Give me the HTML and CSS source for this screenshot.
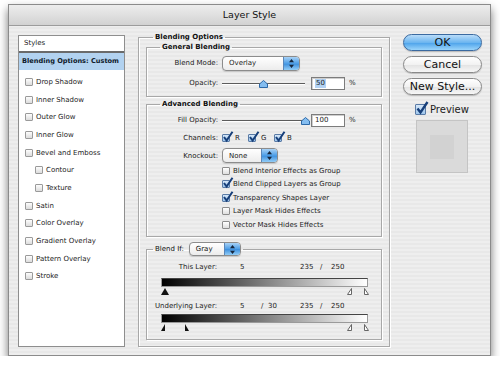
FILE: index.html
```html
<!DOCTYPE html>
<html lang="en">
<head>
  <meta charset="UTF-8">
  <title>Layer Style</title>
  <link rel="stylesheet" href="styles.css">
</head>
<body>
  <div class="window">
    <div class="titlebar">Layer Style</div>
    <div class="content">

      <!-- styles list -->
      <div class="styles-list">
        <div class="list-head">Styles</div>
        <div class="list-selected">Blending Options: Custom</div>
        <div class="list-rows">
          <div class="list-item"><span class="box"></span>Drop Shadow</div>
          <div class="list-item"><span class="box"></span>Inner Shadow</div>
          <div class="list-item"><span class="box"></span>Outer Glow</div>
          <div class="list-item"><span class="box"></span>Inner Glow</div>
          <div class="list-item"><span class="box"></span>Bevel and Emboss</div>
          <div class="list-item sub"><span class="box"></span>Contour</div>
          <div class="list-item sub"><span class="box"></span>Texture</div>
          <div class="list-item"><span class="box"></span>Satin</div>
          <div class="list-item"><span class="box"></span>Color Overlay</div>
          <div class="list-item"><span class="box"></span>Gradient Overlay</div>
          <div class="list-item"><span class="box"></span>Pattern Overlay</div>
          <div class="list-item"><span class="box"></span>Stroke</div>
        </div>
      </div>

      <!-- blending options -->
      <fieldset class="group outer">
        <legend>Blending Options</legend>

        <fieldset class="group general">
          <legend class="inner-legend">General Blending</legend>
          <div class="row h20">
            <span class="lbl">Blend Mode:</span>
            <span class="select mode"><span class="sel-text">Overlay</span><span class="arrows"><svg width="5" height="9" viewBox="0 0 5 9"><path d="M2.5 0 L5 3.2 H0 Z M2.5 9 L0 5.8 H5 Z" fill="#16263d"/></svg></span></span>
          </div>
          <div class="row h20">
            <span class="lbl">Opacity:</span>
            <span class="slider"><span class="thumb" style="left: 50%"><svg width="9" height="8" viewBox="0 0 9 8"><path d="M4.5 0.5 L8.5 4 V7.5 H0.5 V4 Z" fill="#84bdf0" stroke="#2d69a8"/></svg></span></span>
            <span class="field"><span class="hilite">50</span></span>
            <span class="pct">%</span>
          </div>
        </fieldset>

        <fieldset class="group advanced">
          <legend class="inner-legend">Advanced Blending</legend>
          <div class="row h18">
            <span class="lbl">Fill Opacity:</span>
            <span class="slider"><span class="thumb" style="left: 100%"><svg width="9" height="8" viewBox="0 0 9 8"><path d="M4.5 0.5 L8.5 4 V7.5 H0.5 V4 Z" fill="#84bdf0" stroke="#2d69a8"/></svg></span></span>
            <span class="field">100</span>
            <span class="pct">%</span>
          </div>
          <div class="row h18">
            <span class="lbl">Channels:</span>
            <span class="chan"><span class="cb on"><svg width="12" height="12" viewBox="0 0 12 12"><path d="M2 6 L4.6 9.5 L10.5 0.8" fill="none" stroke="#173f7a" stroke-width="2"/></svg></span>R</span>
            <span class="chan"><span class="cb on"><svg width="12" height="12" viewBox="0 0 12 12"><path d="M2 6 L4.6 9.5 L10.5 0.8" fill="none" stroke="#173f7a" stroke-width="2"/></svg></span>G</span>
            <span class="chan"><span class="cb on"><svg width="12" height="12" viewBox="0 0 12 12"><path d="M2 6 L4.6 9.5 L10.5 0.8" fill="none" stroke="#173f7a" stroke-width="2"/></svg></span>B</span>
          </div>
          <div class="row h17">
            <span class="lbl">Knockout:</span>
            <span class="select knock"><span class="sel-text">None</span><span class="arrows"><svg width="5" height="9" viewBox="0 0 5 9"><path d="M2.5 0 L5 3.2 H0 Z M2.5 9 L0 5.8 H5 Z" fill="#16263d"/></svg></span></span>
          </div>
          <div class="opt"><span class="cb"></span>Blend Interior Effects as Group</div>
          <div class="opt"><span class="cb on"><svg width="12" height="12" viewBox="0 0 12 12"><path d="M2 6 L4.6 9.5 L10.5 0.8" fill="none" stroke="#173f7a" stroke-width="2"/></svg></span>Blend Clipped Layers as Group</div>
          <div class="opt"><span class="cb on"><svg width="12" height="12" viewBox="0 0 12 12"><path d="M2 6 L4.6 9.5 L10.5 0.8" fill="none" stroke="#173f7a" stroke-width="2"/></svg></span>Transparency Shapes Layer</div>
          <div class="opt"><span class="cb"></span>Layer Mask Hides Effects</div>
          <div class="opt"><span class="cb"></span>Vector Mask Hides Effects</div>
        </fieldset>

        <fieldset class="group blendif">
          <legend class="if-legend">Blend If: <span class="select gray"><span class="sel-text">Gray</span><span class="arrows"><svg width="5" height="9" viewBox="0 0 5 9"><path d="M2.5 0 L5 3.2 H0 Z M2.5 9 L0 5.8 H5 Z" fill="#16263d"/></svg></span></span></legend>
          <div class="row h14 first">
            <span class="lbl2">This Layer:</span>
            <span class="n-a">5</span><span class="n-s"></span><span class="n-b"></span>
            <span class="n-c">235</span><span class="n-d">/</span><span>250</span>
          </div>
          <div class="bar"></div>
          <div class="ticks">
            <svg class="tick" style="left: 0px" width="8" height="7" viewBox="0 0 8 7"><path d="M4 0 L8 7 H0 Z" fill="#111"/></svg>
            <svg class="tick" style="left: 186px" width="5" height="7" viewBox="0 0 5 7"><path d="M0.5 6.5 L4.5 0.5 V6.5 Z" fill="#fff" stroke="#666"/></svg>
            <svg class="tick" style="left: 203px" width="5" height="7" viewBox="0 0 5 7"><path d="M0.5 0.5 V6.5 H4.5 Z" fill="#fff" stroke="#666"/></svg>
          </div>
          <div class="row h14 second">
            <span class="lbl2">Underlying Layer:</span>
            <span class="n-a">5</span><span class="n-s">/</span><span class="n-b">30</span>
            <span class="n-c">235</span><span class="n-d">/</span><span>250</span>
          </div>
          <div class="bar low"></div>
          <div class="ticks">
            <svg class="tick" style="left: 0px" width="5" height="7" viewBox="0 0 5 7"><path d="M0 7 L4 0 V7 Z" fill="#111"/></svg>
            <svg class="tick" style="left: 24px" width="5" height="7" viewBox="0 0 5 7"><path d="M0 0 V7 H4 Z" fill="#111"/></svg>
            <svg class="tick" style="left: 186px" width="5" height="7" viewBox="0 0 5 7"><path d="M0.5 6.5 L4.5 0.5 V6.5 Z" fill="#fff" stroke="#666"/></svg>
            <svg class="tick" style="left: 203px" width="5" height="7" viewBox="0 0 5 7"><path d="M0.5 0.5 V6.5 H4.5 Z" fill="#fff" stroke="#666"/></svg>
          </div>
        </fieldset>
      </fieldset>

      <!-- buttons -->
      <div class="side">
        <button class="btn ok">OK</button>
        <button class="btn">Cancel</button>
        <button class="btn">New Style...</button>
        <div class="preview-row">
          <span class="cb big on"><svg width="14" height="14" viewBox="0 0 14 14"><path d="M2.5 7.5 L5.5 11.5 L12.5 1" fill="none" stroke="#173f7a" stroke-width="2.4"/></svg></span>
          Preview
        </div>
        <div class="swatch"><div class="swatch-inner"></div></div>
      </div>

    </div>
  </div>
</body>
</html>
```

FILE: styles.css
```css
body {
  margin: 0;
  background: #fff;
  font-family: "DejaVu Sans", Verdana, sans-serif;
  font-size: 7px;
  color: #1c1c1c;
}

.window {
  width: 483px;
  height: 352px;
  margin: 4px 0 0 8px;
  box-sizing: border-box;
  border: 1px solid #8b8b8b;
  background: repeating-linear-gradient(#eeeeee 0, #eeeeee 2px, #e8e8e8 2px, #e8e8e8 4px);
  box-shadow: 0 5px 9px rgba(0, 0, 0, 0.55);
}
.titlebar {
  height: 20px;
  line-height: 20px;
  text-align: center;
  font-size: 9.5px;
  color: #111;
  background: linear-gradient(#ededed, #d2d2d2);
  border-bottom: 1px solid #9c9c9c;
}
.content {
  display: flex;
  align-items: flex-start;
  padding: 9px 0 0 9px;
}

/* left list */
.styles-list {
  width: 107px;
  height: 312px;
  box-sizing: border-box;
  border: 1px solid #8e8e8e;
  background: #fff;
}
.list-head {
  height: 15px;
  line-height: 15px;
  padding-left: 5px;
  border-bottom: 2px solid #6a6a6a;
}
.list-selected {
  height: 17px;
  line-height: 17px;
  padding-left: 3px;
  background: #b2d2f0;
  font-size: 6.6px;
  font-weight: bold;
  white-space: nowrap;
  color: #0f1a2a;
}
.list-rows {
  padding-top: 3px;
}
.list-item {
  display: flex;
  align-items: center;
  gap: 3px;
  height: 17.7px;
  padding-left: 6px;
}
.list-item.sub {
  padding-left: 16px;
}
.box {
  width: 6px;
  height: 6px;
  border: 1px solid #9a9a9a;
  border-radius: 1px;
  background: linear-gradient(#fdfdfd, #dcdcdc);
}

/* grouped boxes */
.group {
  margin: 0;
  padding: 0;
  min-width: 0;
  border: 1px solid #a8a8a8;
  box-shadow: 1px 1px 0 #fff, inset 1px 1px 0 #fff;
}
.group legend {
  padding: 0 2px;
  line-height: 9px;
  font-weight: bold;
  color: #111;
}
.outer {
  width: 252px;
  box-sizing: border-box;
  margin: -2.5px 0 0 13px;
  padding: 0 7px 6px 7px;
}
.outer > legend {
  margin-left: 7px;
}
.inner-legend {
  margin-left: 13px;
}
.general {
  margin-top: 1px;
  padding: 1.5px 0 3px 0;
}
.advanced {
  margin-top: 2.5px;
  padding: 2.5px 0 4px 0;
}
.blendif {
  margin-top: 5.5px;
  padding: 0 0 8px 0;
}
.group .if-legend {
  display: flex;
  align-items: center;
  margin-left: 6px;
  line-height: 14px;
  font-weight: normal;
}

.row {
  display: flex;
  align-items: center;
}
.h20 { height: 20px; }
.h18 { height: 18px; }
.h17 { height: 17px; }
.h14 { height: 14px; }
.lbl {
  width: 71px;
  margin-right: 4px;
  text-align: right;
  flex: none;
}

/* popup menus */
.select {
  display: flex;
  align-items: center;
  justify-content: space-between;
  box-sizing: border-box;
  height: 15px;
  border: 1px solid #8c8c8c;
  border-radius: 4px;
  background: linear-gradient(#ffffff, #ececec);
  box-shadow: 0 1px 1px rgba(0, 0, 0, 0.15);
  overflow: hidden;
}
.sel-text {
  padding-left: 6px;
}
.arrows {
  display: flex;
  align-items: center;
  justify-content: center;
  width: 15px;
  height: 100%;
  background: linear-gradient(#a8d2f6, #4c9de6 50%, #3a8ddc 51%, #92cdf7);
  border-left: 1px solid #5a86b8;
}
.mode { width: 78px; }
.knock { width: 56px; }
.gray {
  width: 52px;
  height: 14px;
  margin-left: 5px;
}

/* sliders */
.slider {
  position: relative;
  width: 83px;
  height: 9px;
}
.slider::before {
  content: "";
  position: absolute;
  left: 0;
  right: 0;
  top: 4px;
  height: 1px;
  background: #5c5c5c;
  border-bottom: 1px solid #fff;
}
.thumb {
  position: absolute;
  top: 1px;
  margin-left: -4.5px;
  line-height: 0;
}
.field {
  box-sizing: border-box;
  width: 34px;
  height: 13px;
  margin-left: 6px;
  padding: 1px 3px;
  line-height: 9px;
  border: 1px solid #7c7c7c;
  background: #fff;
  box-shadow: inset 1px 1px 0 #cfcfcf;
}
.hilite {
  display: inline-block;
  padding: 0 1px;
  background: #b2d2f3;
}
.pct {
  margin-left: 4px;
}

/* checkboxes */
.cb {
  position: relative;
  flex: none;
  box-sizing: border-box;
  width: 8px;
  height: 8px;
  border: 1px solid #8d8d8d;
  border-radius: 1px;
  background: linear-gradient(#ffffff, #dedede);
}
.cb.on {
  border-color: #5a7ba6;
  background: linear-gradient(#d6e7f8, #9ec6ec);
}
.cb svg {
  position: absolute;
  left: -1px;
  top: -4px;
}
.chan {
  display: flex;
  align-items: center;
  gap: 5px;
  width: 26px;
}
.opt {
  display: flex;
  align-items: center;
  gap: 3px;
  height: 13.5px;
  padding-left: 75px;
}

/* blend if */
.lbl2 {
  width: 70px;
  text-align: right;
  flex: none;
}
.first {
  margin-top: 4px;
}
.second {
  margin-top: 4px;
}
.n-a { margin-left: 23px; width: 21px; }
.n-s { width: 7px; }
.n-b { width: 32px; }
.n-c { width: 20px; }
.n-d { width: 11px; }
.bar {
  box-sizing: border-box;
  width: 207px;
  height: 9px;
  margin: 4px 0 0 14px;
  border: 1px solid #9a9a9a;
  border-top-color: #444;
  background: linear-gradient(to right, #000, #fff);
}
.bar.low {
  margin-top: 1px;
}
.ticks {
  position: relative;
  width: 207px;
  height: 8px;
  margin-left: 14px;
}
.tick {
  position: absolute;
  top: 1px;
}

/* right column */
.side {
  display: flex;
  flex-direction: column;
  width: 79px;
  margin: -1px 0 0 13px;
}
.btn {
  height: 17px;
  margin-bottom: 5px;
  padding: 0;
  font-family: "DejaVu Sans", Verdana, sans-serif;
  font-size: 11px;
  line-height: 15px;
  color: #111;
  border: 1px solid #8a8a8a;
  border-radius: 9px;
  background: linear-gradient(#ffffff, #f2f2f2 50%, #e2e2e2 51%, #f7f7f7);
  box-shadow: 0 1px 1px rgba(0, 0, 0, 0.2);
}
.btn.ok {
  border-color: #3b6aa0;
  background: linear-gradient(#b9dcf9, #6db6f0 50%, #4aa1ea 51%, #9bd5fb);
}
.preview-row {
  display: flex;
  align-items: center;
  gap: 4px;
  height: 12px;
  margin: 3px 0 0 12px;
  font-size: 10px;
}
.cb.big {
  width: 11px;
  height: 11px;
}
.cb.big svg {
  top: -4px;
  left: -1px;
}
.swatch {
  display: flex;
  align-items: center;
  justify-content: center;
  box-sizing: border-box;
  width: 52px;
  height: 53px;
  margin: 5px 0 0 13px;
  border: 1px solid #c4c4c4;
  background: #dadada;
}
.swatch-inner {
  width: 24px;
  height: 24px;
  background: #d2d2d2;
}
```
